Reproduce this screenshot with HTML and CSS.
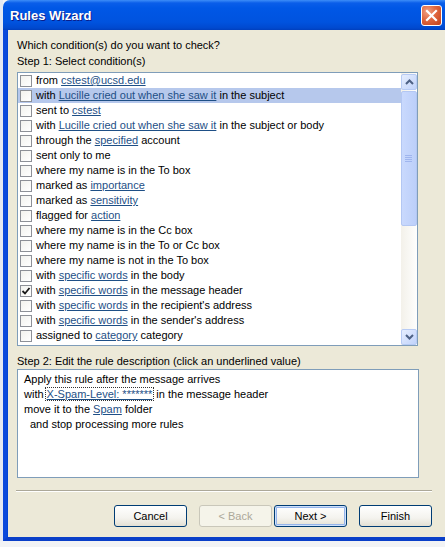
FILE: index.html
```html
<!doctype html>
<html lang="en">
  <head>
    <meta charset="utf-8" />
    <title>Rules Wizard</title>
    <link rel="stylesheet" href="styles.css">
  </head>
  <body>
    <div class="desktop">
      <div class="behind"></div>
      <div class="window">
        <!-- Title bar -->
        <div class="titlebar">
          <span class="title">Rules Wizard</span>
          <span class="close">
            <svg width="13" height="13" viewBox="0 0 13 13">
              <path d="M2 2 L11 11 M11 2 L2 11" stroke="#fff" stroke-width="2.2" stroke-linecap="square" fill="none" />
            </svg>
          </span>
        </div>

        <div class="frame">
          <div class="content">
            <p class="prompt">Which condition(s) do you want to check?</p>
            <p class="step">Step 1: Select condition(s)</p>

            <div class="listbox">
              <ul class="conditions">
                <li><span class="check"></span>from&nbsp;<a href="#">cstest@ucsd.edu</a></li>
                <li class="selected"><span class="check"></span>with&nbsp;<a href="#">Lucille cried out when she saw it</a>&nbsp;in the subject</li>
                <li><span class="check"></span>sent to&nbsp;<a href="#">cstest</a></li>
                <li><span class="check"></span>with&nbsp;<a href="#">Lucille cried out when she saw it</a>&nbsp;in the subject or body</li>
                <li><span class="check"></span>through the&nbsp;<a href="#">specified</a>&nbsp;account</li>
                <li><span class="check"></span>sent only to me</li>
                <li><span class="check"></span>where my name is in the To box</li>
                <li><span class="check"></span>marked as&nbsp;<a href="#">importance</a></li>
                <li><span class="check"></span>marked as&nbsp;<a href="#">sensitivity</a></li>
                <li><span class="check"></span>flagged for&nbsp;<a href="#">action</a></li>
                <li><span class="check"></span>where my name is in the Cc box</li>
                <li><span class="check"></span>where my name is in the To or Cc box</li>
                <li><span class="check"></span>where my name is not in the To box</li>
                <li><span class="check"></span>with&nbsp;<a href="#">specific words</a>&nbsp;in the body</li>
                <li>
                  <span class="check">
                    <svg width="10" height="10" viewBox="0 0 10 10">
                      <path d="M1.5 5 L4 7.5 L8.5 2" stroke="#1a1a1a" stroke-width="1.8" fill="none" />
                    </svg>
                  </span>with&nbsp;<a href="#">specific words</a>&nbsp;in the message header
                </li>
                <li><span class="check"></span>with&nbsp;<a href="#">specific words</a>&nbsp;in the recipient's address</li>
                <li><span class="check"></span>with&nbsp;<a href="#">specific words</a>&nbsp;in the sender's address</li>
                <li><span class="check"></span>assigned to&nbsp;<a href="#">category</a>&nbsp;category</li>
              </ul>

              <div class="scrollbar">
                <span class="sb-btn">
                  <svg width="9" height="6" viewBox="0 0 9 6">
                    <path d="M1 5 L4.5 1.5 L8 5" stroke="#4d6185" stroke-width="2" fill="none" />
                  </svg>
                </span>
                <span class="sb-track">
                  <span class="sb-thumb">
                    <svg width="8" height="8" viewBox="0 0 8 8">
                      <path d="M0 0.5 H7 M0 2.5 H7 M0 4.5 H7 M0 6.5 H7" stroke="#9fb5ee" stroke-width="1" />
                    </svg>
                  </span>
                </span>
                <span class="sb-btn">
                  <svg width="9" height="6" viewBox="0 0 9 6">
                    <path d="M1 1 L4.5 4.5 L8 1" stroke="#4d6185" stroke-width="2" fill="none" />
                  </svg>
                </span>
              </div>
            </div>

            <p class="step step2">Step 2: Edit the rule description (click an underlined value)</p>

            <div class="description">
              <p>Apply this rule after the message arrives</p>
              <p>with<a href="#" class="focused">X-Spam-Level: *******</a>in the message header</p>
              <p>move it to the&nbsp;<a href="#">Spam</a>&nbsp;folder</p>
              <p class="indent">and stop processing more rules</p>
            </div>

            <div class="separator"></div>

            <div class="buttons">
              <button class="btn">Cancel</button>
              <button class="btn disabled">&lt; Back</button>
              <button class="btn default">Next &gt;</button>
              <button class="btn">Finish</button>
            </div>
          </div>
        </div>
      </div>
    </div>
  </body>
</html>
```

FILE: styles.css
```css
* {
  box-sizing: border-box;
}
body {
  margin: 0;
  height: 547px;
  overflow: hidden;
  background: #f2f3f5;
  font-family: "Liberation Sans", Arial, sans-serif;
  font-size: 11px;
  color: #000;
}
p {
  margin: 0;
}
a {
  color: #1e4f86;
  text-decoration: underline;
}

.desktop {
  display: flex;
  height: 541px;
}
.behind {
  width: 3px;
  flex: none;
  background: #e4e9f2;
}
.window {
  flex: 1;
  display: flex;
  flex-direction: column;
  min-width: 0;
}

/* Title bar */
.titlebar {
  height: 30px;
  flex: none;
  display: flex;
  align-items: center;
  justify-content: space-between;
  padding: 0 3px 0 7px;
  border-top-left-radius: 7px;
  background: linear-gradient(#3d8df8 0, #0a5ee9 3px, #0057e6 8px, #0053df 22px, #0049cf 28px, #003fbd 30px);
}
.title {
  color: #fff;
  font-weight: bold;
  font-size: 13px;
  text-shadow: 1px 1px 0 #0a1d8a;
  margin-top: 1px;
}
.close {
  width: 21px;
  height: 21px;
  display: flex;
  align-items: center;
  justify-content: center;
  border: 1px solid #fff;
  border-radius: 3px;
  background: radial-gradient(circle at 30% 30%, #f0a184 0, #e0673f 45%, #c3401a 100%);
}

/* Frame */
.frame {
  flex: 1;
  background: #ece9d8;
  border-left: 4px solid #0a49dc;
  border-bottom: 4px solid #0a3fc8;
  box-shadow: inset 1px 0 0 #0044d6;
}
.content {
  width: 425px;
  padding: 7px 0 0 10px;
}
.prompt,
.step {
  line-height: 16px;
  height: 16px;
  white-space: nowrap;
}

/* Condition list */
.listbox {
  margin-top: 3px;
  width: 401px;
  height: 274px;
  border: 1px solid #7f9db9;
  background: #fff;
  display: flex;
}
.conditions {
  list-style: none;
  margin: 0;
  padding: 0;
  flex: 1;
  min-width: 0;
  overflow: hidden;
}
.conditions li {
  height: 15px;
  line-height: 15px;
  display: flex;
  align-items: center;
  padding-left: 2px;
  white-space: nowrap;
}
.conditions li.selected {
  background: #b6c8ec;
}
.check {
  width: 12px;
  height: 12px;
  flex: none;
  margin-right: 4px;
  border: 1px solid #8d9097;
  background: linear-gradient(135deg, #f2f2ee, #ffffff);
  display: flex;
  align-items: center;
  justify-content: center;
}

/* Scrollbar */
.scrollbar {
  width: 16px;
  flex: none;
  display: flex;
  flex-direction: column;
  background: linear-gradient(90deg, #f3f1ea, #fefefd);
  padding-top: 1px;
}
.sb-btn {
  height: 16px;
  flex: none;
  display: flex;
  align-items: center;
  justify-content: center;
  border: 1px solid #b7cbf5;
  border-radius: 2px;
  background: linear-gradient(135deg, #e6eefe, #c1d3fb);
}
.sb-track {
  flex: 1;
  padding-top: 1px;
}
.sb-thumb {
  display: flex;
  align-items: center;
  justify-content: center;
  height: 135px;
  border: 1px solid #b3c7f3;
  border-radius: 2px;
  background: linear-gradient(90deg, #c9d9fd, #bccffa);
}

/* Rule description */
.step2 {
  margin-top: 8px;
  height: 15px;
  line-height: 15px;
}
.description {
  margin-top: 0;
  width: 402px;
  height: 109px;
  border: 1px solid #7f9db9;
  background: #fff;
  padding: 2px 6px;
}
.description p {
  line-height: 15px;
  white-space: nowrap;
}
.description .indent {
  padding-left: 6px;
}
.focused {
  outline: 1px dotted #333;
  outline-offset: -1px;
  padding: 1px 2px;
  margin: 0 2px 0 1px;
}

.separator {
  margin: 12px 0 0 -1px;
  width: 416px;
  height: 2px;
  border-top: 1px solid #aca899;
  border-bottom: 1px solid #fff;
}

/* Buttons */
.buttons {
  margin-top: 13px;
  width: 415px;
  display: flex;
  justify-content: flex-end;
}
.btn {
  width: 73px;
  height: 22px;
  margin-left: 12px;
  font-family: "Liberation Sans", Arial, sans-serif;
  font-size: 11px;
  color: #000;
  border: 1px solid #003c74;
  border-radius: 3px;
  background: linear-gradient(#ffffff, #f4f3ee 60%, #e3e0d4);
  padding: 0;
}
.btn.disabled {
  color: #aca899;
  border-color: #c9c7ba;
  background: #f5f4ea;
}
.btn.default {
  margin-left: 2px;
  box-shadow: inset 0 0 0 1px #cde0fb, inset 0 0 0 2px #95b4ea;
}
```
